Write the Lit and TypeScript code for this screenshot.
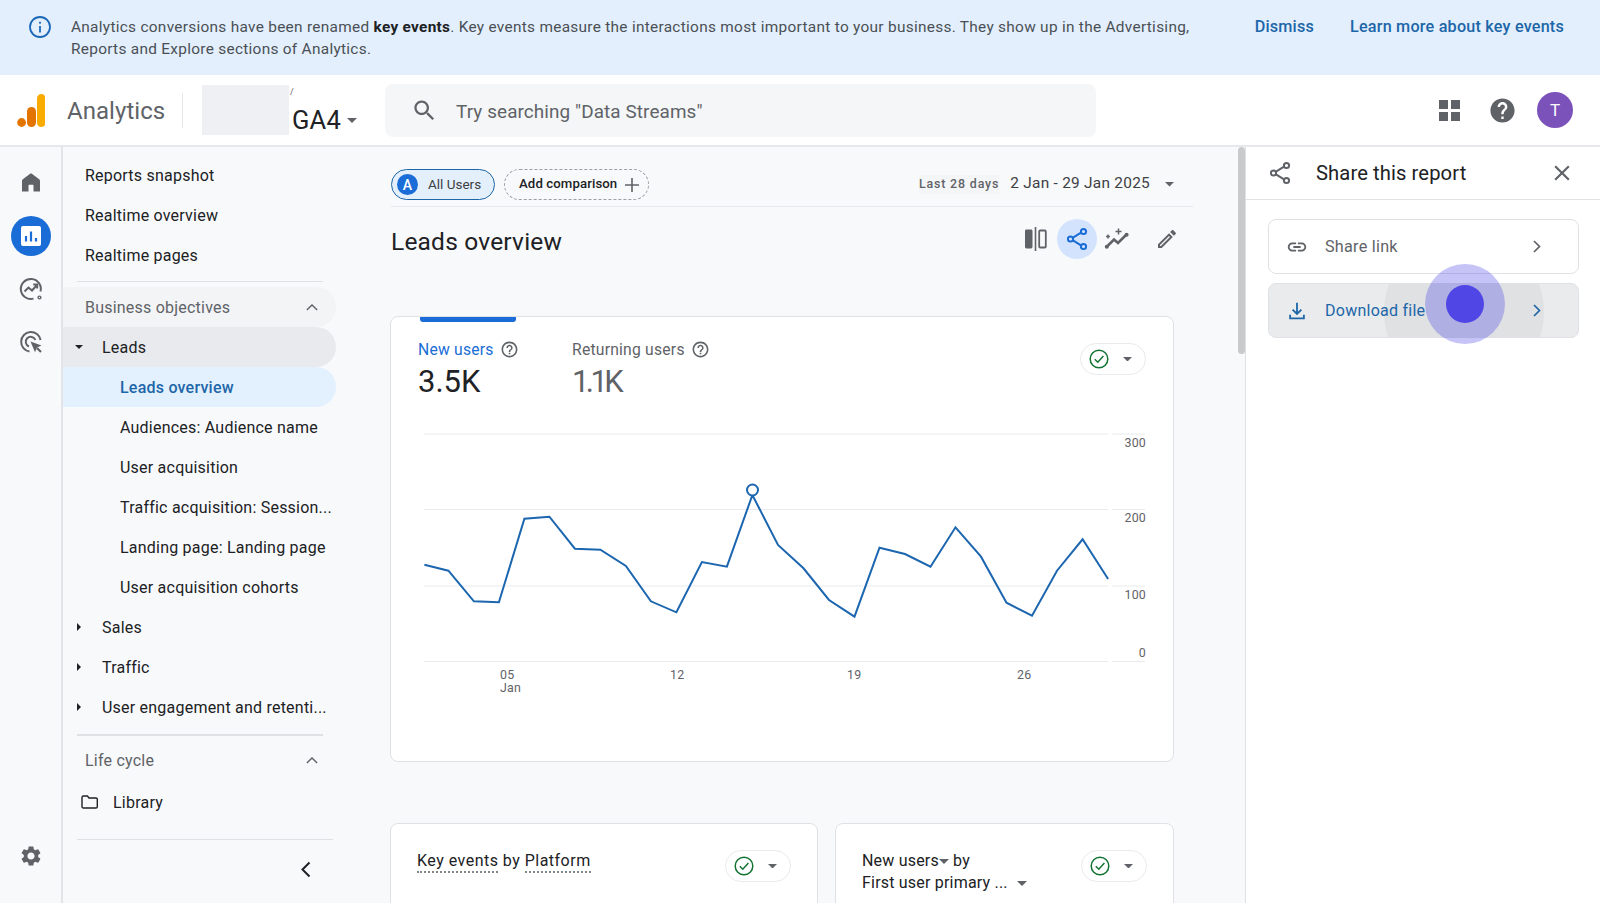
import { LitElement, html, css } from "lit";
import { customElement } from "lit/decorators.js";

const RAW: [number, number][] = [[87,434],[134,452],[184,544],[233,547],[283,296],[332,290],[382,386],[432,389],[482,438],[531,544],[581,577],[631,426],[680,440],[730,225],[780,375],[830,445],[880,540],[930,590],[979,383],[1029,402],[1079,440],[1128,322],[1178,410],[1228,548],[1278,587],[1327,452],[1377,358],[1427,477]];
const POINTS = RAW.map(([x, y]) => `${(380 + x / 1.96).toFixed(1)},${(420 + y / 3).toFixed(1)}`).join(" ");

const caret = (cls = "") => html`<svg class="caret ${cls}" viewBox="0 0 10 5"><path d="M0 0h10L5 5z" fill="currentColor"/></svg>`;
const sideCaret = html`<svg class="side-caret" viewBox="0 0 5 10"><path d="M0 0v10l5-5z" fill="currentColor"/></svg>`;
const helpOutline = html`<svg class="help-o" viewBox="0 0 24 24"><path fill="currentColor" d="M11 18h2v-2h-2v2zm1-16C6.48 2 2 6.48 2 12s4.48 10 10 10 10-4.48 10-10S17.52 2 12 2zm0 18c-4.41 0-8-3.59-8-8s3.59-8 8-8 8 3.59 8 8-3.59 8-8 8zm0-14c-2.21 0-4 1.79-4 4h2c0-1.1.9-2 2-2s2 .9 2 2c0 2-3 1.75-3 5h2c0-2.25 3-2.5 3-5 0-2.21-1.79-4-4-4z"/></svg>`;
const statusChip = html`<div class="status-chip">
  <svg class="check" viewBox="0 0 20 20"><circle cx="10" cy="10" r="8.8" fill="none" stroke="currentColor" stroke-width="1.5"/><path d="M5.8 10.2l3 3 5.6-6.2" fill="none" stroke="currentColor" stroke-width="1.5"/></svg>
  ${caret()}
</div>`;
const chevUp = html`<svg class="chev-up" viewBox="0 0 14 8"><path d="M1 7l6-6 6 6" fill="none" stroke="currentColor" stroke-width="1.6"/></svg>`;
const shareIcon = (cls: string) => html`<svg class=${cls} viewBox="0 0 24 24" fill="none" stroke="currentColor" stroke-width="2"><path d="M8 10.6l8-5M8 13.4l8 5"/><circle cx="5.5" cy="12" r="2.6"/><circle cx="18.5" cy="4.5" r="2.6"/><circle cx="18.5" cy="19.5" r="2.6"/></svg>`;

@customElement("app-root")
export class AppRoot extends LitElement {
  static styles = css`
    :host { display: flex; flex-direction: column; width: 1600px; height: 903px; overflow: hidden; background: #f8f9fb; font-family: Roboto, "Liberation Sans", sans-serif; color: #202124; }
    svg { display: block; flex: none; }

    .banner { height: 75px; flex: none; background: #e3effd; display: flex; align-items: flex-start; box-sizing: border-box; padding: 16px 36px 0 29px; }
    .info { width: 22px; height: 22px; color: #1a68b8; margin-right: 20px; }
    .banner-text { width: 1140px; font-size: 15.4px; line-height: 22px; letter-spacing: .29px; color: #4a4f55; }
    .banner-text b { color: #202124; font-weight: 700; }
    .banner-actions { margin-left: auto; display: flex; gap: 36px; font-size: 16.2px; line-height: 22px; font-weight: 500; letter-spacing: .2px; color: #1d66a8; }

    .header { height: 72px; flex: none; box-sizing: border-box; background: #fff; border-bottom: 2px solid #e6e8eb; display: flex; align-items: center; padding-left: 17px; }
    .logo { width: 28px; height: 33px; }
    .brand { margin: 2px 0 0 22px; font-size: 24px; color: #5f6368; width: 97px; letter-spacing: .05px; }
    .vsep { width: 1px; height: 35px; background: #e6e8eb; margin-left: 18px; }
    .blur { width: 87px; height: 50px; background: #eef0f3; margin-left: 19px; }
    .prop { display: flex; align-items: flex-end; height: 50px; position: relative; width: 96px; }
    .slash { position: absolute; left: 1px; top: 2px; font-size: 9px; color: #5f6368; }
    .ga { font-size: 25.5px; line-height: 34px; margin: 0 0 -2px 3px; color: #202124; letter-spacing: .2px; }
    .prop .caret { width: 10px; height: 5px; margin: 0 0 12px 6px; color: #5f6368; }
    .search { width: 711px; height: 53px; border-radius: 8px; background: #f5f6f7; display: flex; align-items: center; box-sizing: border-box; padding-left: 26px; color: #5f6368; font-size: 18.9px; letter-spacing: .1px; }
    .search svg { width: 27px; height: 27px; margin-right: 18px; }
    .search span { padding-top: 2px; }
    .head-right { margin-left: auto; display: flex; align-items: center; padding-right: 27px; color: #5f6368; }
    .apps { display: grid; grid-template-columns: 9px 9px; grid-auto-rows: 9px; gap: 3px; }
    .apps i { background: #5f6368; display: block; }
    .help { width: 29px; height: 29px; margin-left: 28px; }
    .avatar { width: 36px; height: 36px; border-radius: 50%; background: #7b52b9; color: #fff; margin-left: 20px; display: flex; align-items: center; justify-content: center; font-size: 17px; }

    .body { flex: 1; display: flex; min-height: 0; }

    .rail { width: 61px; flex: none; border-right: 2px solid #e2e4e7; display: flex; flex-direction: column; align-items: center; padding: 8.5px 0 35px; }
    .rail-item { height: 53.4px; display: flex; align-items: center; justify-content: center; color: #5f6368; }
    .rail-item svg { width: 24px; height: 24px; }
    .active-dot { width: 40px; height: 40px; border-radius: 50%; background: #1a6dd6; display: flex; align-items: center; justify-content: center; }
    .active-dot svg { width: 20px; height: 20px; }
    .gear { margin-top: auto; width: 24px; height: 24px; color: #5f6368; }

    .nav { width: 273px; flex: none; padding-top: 8px; font-size: 16px; letter-spacing: .22px; }
    .row { height: 40px; display: flex; align-items: center; box-sizing: border-box; white-space: nowrap; color: #202124; }
    .lvl0 { padding-left: 22px; }
    .lvl1 { padding-left: 14px; }
    .lvl2 { padding-left: 57px; }
    .side-caret { width: 4px; height: 8px; margin-right: 21px; color: #202124; }
    .down-caret { width: 8px; height: 4px; margin-right: 19px; color: #202124; }
    .rule { height: 1px; background: #dfe1e5; margin-left: 14px; }
    .rule.a { width: 246px; margin-top: 6px; margin-bottom: 5px; }
    .rule.b { width: 246px; margin-top: 7px; margin-bottom: 4px; height: 2px; }
    .rule.c { width: 256px; margin-top: 17px; }
    .group { justify-content: space-between; padding: 0 18px 0 22px; color: #5f6368; border-radius: 0 20px 20px 0; }
    .group.tint { background: #f3f4f6; }
    .chev-up { width: 12px; height: 7px; color: #5f6368; }
    .leads { background: #e8eaed; border-radius: 0 20px 20px 0; padding-left: 12px; }
    .current { background: #e3f0fd; color: #1d66a8; font-weight: 500; border-radius: 0 20px 20px 0; }
    .library { margin-top: 2px; padding-left: 18px; gap: 15px; }
    .library svg { width: 17px; height: 14px; color: #202124; }
    .collapse { display: flex; justify-content: flex-end; padding: 21px 25px 0 0; }
    .collapse svg { width: 11px; height: 17px; color: #202124; }

    .main { flex: 1; min-width: 0; padding: 22px 0 0 55px; overflow: hidden; }
    .toolbar { width: 802px; height: 37px; border-bottom: 1px solid #e6e8eb; display: flex; align-items: flex-start; }
    .chip-a { height: 31px; width: 104px; box-sizing: border-box; border: 1px solid #1d66a8; border-radius: 16px; background: #e4effc; display: flex; align-items: center; padding-left: 5px; font-size: 13.5px; gap: 10px; color: #3c4043; }
    .chip-a span { padding-bottom: 2px; }
    .chip-a i { width: 21px; height: 21px; border-radius: 50%; background: #1a6dd6; color: #fff; font-style: normal; display: flex; align-items: center; justify-content: center; font-size: 14px; font-weight: 500; }
    .chip-add { margin-left: 9px; height: 31px; width: 145px; box-sizing: border-box; border: 1px dashed #9aa0a6; border-radius: 16px; display: flex; align-items: center; padding-left: 14px; font-size: 13.2px; font-weight: 500; color: #202124; gap: 8px; letter-spacing: .1px; }
    .chip-add span { padding-bottom: 2px; }
    .chip-add svg { width: 14px; height: 14px; color: #5f6368; }
    .date { margin-left: auto; height: 31px; display: flex; align-items: center; padding: 0 19px 0 0; }
    .date-label { font-size: 12.4px; font-weight: 500; letter-spacing: .85px; color: #5f6368; background: #f4f5f6; padding: 1px 0 3px; }
    .date-range { margin-left: 11px; font-size: 15.4px; color: #3c4043; letter-spacing: .27px; padding-bottom: 3px; }
    .date .caret { width: 9px; height: 4.5px; margin-left: 15px; color: #5f6368; }

    .title-row { width: 802px; height: 40px; margin-top: 11px; display: flex; align-items: center; }
    h1 { margin: 6px 0 0; font-size: 24.5px; font-weight: 400; letter-spacing: .2px; color: #202124; }
    .title-tools { margin: 1px 0 0 auto; display: flex; align-items: center; padding-right: 14px; color: #5f6368; }
    .title-tools svg { width: 24px; height: 24px; }
    .share-on { width: 40px; height: 40px; border-radius: 50%; background: #d3e3fd; color: #1a6dd6; display: flex; align-items: center; justify-content: center; margin-left: 9px; }
    .title-tools .spark { width: 26px; margin-left: 7px; }
    .edit { margin-left: 25px; }

    .card { background: #fff; border: 1px solid #dfe1e5; border-radius: 8px; box-sizing: border-box; }
    .card-main { width: 784px; height: 446px; margin: 58px 0 0 -1px; }
    .tab { width: 96px; height: 5px; background: #1a6dd6; margin-left: 29px; border-radius: 0 0 3px 3px; }
    .metrics { display: flex; padding: 16px 27px 0; align-items: flex-start; }
    .metric { width: 154px; }
    .metric-label { display: flex; align-items: center; gap: 6px; height: 22px; font-size: 15.7px; letter-spacing: .22px; color: #5f6368; }
    .help-o { width: 19px; height: 19px; color: #5f6368; }
    .metric.on .metric-label { color: #1a6dd6; }
    .metric-value { font-size: 31px; line-height: 44px; color: #5f6368; }
    .metric-value.narrow { letter-spacing: -3.6px; }
    .metric.on .metric-value { color: #202124; }
    .status-chip { margin-left: auto; width: 66px; height: 32px; border: 1px solid #e8eaed; border-radius: 16px; box-sizing: border-box; display: flex; align-items: center; padding-left: 8px; background: #fff; }
    .check { width: 20px; height: 20px; color: #137333; }
    .status-chip .caret { width: 9px; height: 4.5px; margin-left: 14px; color: #5f6368; }
    .metrics .status-chip { margin-top: 5px; }
    .chart { display: block; width: 782px; height: 280px; margin-top: 21px; }
    .chart text { font-family: Roboto, "Liberation Sans", sans-serif; font-size: 12.4px; fill: #5f6368; letter-spacing: .2px; }

    .lower { display: flex; gap: 17px; margin: 61px 0 0 -1px; }
    .card-low { height: 120px; padding: 26px 26px 0 26px; display: flex; align-items: flex-start; font-size: 16px; line-height: 22px; letter-spacing: .2px; color: #202124; }
    .card-low.one { width: 428px; letter-spacing: .48px; }
    .card-low.two { width: 339px; }
    .dot-u { border-bottom: 2px dotted #80868b; padding-bottom: 1px; }
    .inline-caret { display: inline-block; width: 10px; height: 5px; vertical-align: middle; color: #5f6368; }
    .inline-caret.gap { margin-left: 5px; }

    .scroll { width: 7px; flex: none; }
    .thumb { height: 207px; background: #c8cacc; border-radius: 4px; }

    .panel { width: 355px; flex: none; box-sizing: border-box; background: #fff; border-left: 1px solid #dfe1e5; position: relative; overflow: hidden; }
    .panel-head { height: 53px; box-sizing: border-box; border-bottom: 1px solid #e0e2e5; display: flex; align-items: center; padding: 0 25px 0 22px; }
    .panel-head .p-share { width: 24px; height: 24px; color: #5f6368; }
    .panel-title { margin-left: 24px; font-size: 20.2px; letter-spacing: .1px; color: #202124; }
    .close { margin-left: auto; width: 26px; height: 26px; color: #5f6368; }
    .opts { padding: 19px 21px 0 22px; display: flex; flex-direction: column; gap: 9px; }
    .opt { height: 55px; box-sizing: border-box; border: 1px solid #dfe1e5; border-radius: 8px; display: flex; align-items: center; padding: 0 37px 0 17px; font-size: 16.2px; letter-spacing: .25px; color: #5f6368; position: relative; overflow: hidden; }
    .opt svg { position: relative; }
    .opt .o-icon { width: 22px; height: 22px; margin-right: 17px; }
    .opt .o-text { position: relative; }
    .opt .o-chev { margin-left: auto; width: 8px; height: 13px; }
    .opt.hover { background: #e9ebed; color: #1d66a8; font-size: 16px; }
    .ripple { position: absolute; left: 115px; top: -52px; width: 160px; height: 160px; border-radius: 50%; background: #dfe1e3; }
    .pointer-halo { position: absolute; left: 179px; top: 117px; width: 80px; height: 80px; border-radius: 50%; background: rgba(79, 70, 229, .32); display: flex; align-items: center; justify-content: center; }
    .pointer-halo i { width: 38px; height: 38px; border-radius: 50%; background: #4f46e5; display: block; }
  `;

  render() {
    return html`
      <div class="banner">
        <svg class="info" viewBox="0 0 22 22" fill="none" stroke="currentColor" stroke-width="1.8"><circle cx="11" cy="11" r="10"/><path d="M11 10v6.5M11 5.8v2"/></svg>
        <div class="banner-text">Analytics conversions have been renamed <b>key events</b>. Key events measure the interactions most important to your business. They show up in the Advertising, Reports and Explore sections of Analytics.</div>
        <div class="banner-actions"><span>Dismiss</span><span>Learn more about key events</span></div>
      </div>

      <div class="header">
        <svg class="logo" viewBox="0 0 28 33"><circle cx="4.6" cy="28.5" r="4.4" fill="#e37400"/><rect x="10" y="13" width="9" height="20" rx="4.5" fill="#e37400"/><rect x="20" y="0" width="8.6" height="33" rx="4.3" fill="#f9ab00"/></svg>
        <div class="brand">Analytics</div>
        <div class="vsep"></div>
        <div class="blur"></div>
        <div class="prop"><span class="slash">/</span><span class="ga">GA4</span>${caret()}</div>
        <div class="search">
          <svg viewBox="0 0 24 24"><path fill="currentColor" d="M15.5 14h-.79l-.28-.27C15.41 12.59 16 11.11 16 9.5 16 5.91 13.09 3 9.5 3S3 5.91 3 9.5 5.91 16 9.5 16c1.61 0 3.09-.59 4.23-1.57l.27.28v.79l5 4.99L20.49 19l-4.99-5zm-6 0C7.01 14 5 11.99 5 9.5S7.01 5 9.5 5 14 7.01 14 9.5 11.99 14 9.5 14z"/></svg>
          <span>Try searching "Data Streams"</span>
        </div>
        <div class="head-right">
          <div class="apps"><i></i><i></i><i></i><i></i></div>
          <svg class="help" viewBox="0 0 24 24"><path fill="currentColor" d="M12 2C6.48 2 2 6.48 2 12s4.48 10 10 10 10-4.48 10-10S17.52 2 12 2zm1 17h-2v-2h2v2zm2.07-7.75l-.9.92C13.45 12.9 13 13.5 13 15h-2v-.5c0-1.1.45-2.1 1.17-2.83l1.24-1.26c.37-.36.59-.86.59-1.41 0-1.1-.9-2-2-2s-2 .9-2 2H8c0-2.21 1.79-4 4-4s4 1.79 4 4c0 .88-.36 1.68-.93 2.25z"/></svg>
          <div class="avatar">T</div>
        </div>
      </div>

      <div class="body">
        <div class="rail">
          <div class="rail-item"><svg viewBox="0 0 24 24"><path fill="currentColor" d="M3 21.5V10.8c0-.6.3-1.1.8-1.5l7-5.4c.7-.5 1.7-.5 2.4 0l7 5.4c.5.4.8.9.8 1.5v10.7h-6.5v-5.7c0-.6-.5-1-1-1h-3c-.5 0-1 .4-1 1v5.7z"/></svg></div>
          <div class="rail-item"><div class="active-dot"><svg viewBox="0 0 20 20"><rect x="0" y="0" width="20" height="20" rx="2" fill="#fff"/><path d="M5 10v5.5M10 5.5v10M15 12v3.5" stroke="#1a6dd6" stroke-width="2.2"/></svg></div></div>
          <div class="rail-item"><svg viewBox="0 0 24 24" fill="none" stroke="currentColor" stroke-width="2"><path d="M21.5 14.5A10 10 0 1 0 14.5 21.6"/><path d="M5.5 14.5l4-4 3.5 3 5-5.5M14.2 7.6h4v4"/><circle cx="20.5" cy="20.5" r="1.4" stroke-width="1.4"/></svg></div>
          <div class="rail-item"><svg viewBox="0 0 24 24" fill="none" stroke="currentColor" stroke-width="2"><path d="M10.5 21.5A9.8 9.8 0 1 1 21.6 10"/><path d="M10 16.5a5 5 0 1 1 6.4-6.5"/><path d="M11.5 11.5l11 4-4.5 2-2 4.8z" fill="currentColor" stroke="none"/><path d="M18 18l4 4" stroke-width="2.2"/></svg></div>
          <svg class="gear" viewBox="0 0 24 24"><path fill="currentColor" d="M19.14 12.94c.04-.3.06-.61.06-.94 0-.32-.02-.64-.07-.94l2.03-1.58c.18-.14.23-.41.12-.61l-1.92-3.32c-.12-.22-.37-.29-.59-.22l-2.39.96c-.5-.38-1.03-.7-1.62-.94l-.36-2.54c-.04-.24-.24-.41-.48-.41h-3.84c-.24 0-.43.17-.47.41l-.36 2.54c-.59.24-1.13.57-1.62.94l-2.39-.96c-.22-.08-.47 0-.59.22L2.74 8.87c-.12.21-.08.47.12.61l2.03 1.58c-.05.3-.09.63-.09.94s.02.64.07.94l-2.03 1.58c-.18.14-.23.41-.12.61l1.92 3.32c.12.22.37.29.59.22l2.39-.96c.5.38 1.03.7 1.62.94l.36 2.54c.05.24.24.41.48.41h3.84c.24 0 .44-.17.47-.41l.36-2.54c.59-.24 1.13-.56 1.62-.94l2.39.96c.22.08.47 0 .59-.22l1.92-3.32c.12-.22.07-.47-.12-.61l-2.01-1.58zM12 15.6c-1.98 0-3.6-1.62-3.6-3.6s1.62-3.6 3.6-3.6 3.6 1.62 3.6 3.6-1.62 3.6-3.6 3.6z"/></svg>
        </div>

        <div class="nav">
          <div class="row lvl0">Reports snapshot</div>
          <div class="row lvl0">Realtime overview</div>
          <div class="row lvl0">Realtime pages</div>
          <div class="rule a"></div>
          <div class="row group tint"><span>Business objectives</span>${chevUp}</div>
          <div class="row lvl1 leads"><svg class="down-caret" viewBox="0 0 10 5"><path d="M0 0h10L5 5z" fill="currentColor"/></svg>Leads</div>
          <div class="row lvl2 current">Leads overview</div>
          <div class="row lvl2">Audiences: Audience name</div>
          <div class="row lvl2">User acquisition</div>
          <div class="row lvl2">Traffic acquisition: Session...</div>
          <div class="row lvl2">Landing page: Landing page</div>
          <div class="row lvl2">User acquisition cohorts</div>
          <div class="row lvl1">${sideCaret}Sales</div>
          <div class="row lvl1">${sideCaret}Traffic</div>
          <div class="row lvl1">${sideCaret}User engagement and retenti...</div>
          <div class="rule b"></div>
          <div class="row group"><span>Life cycle</span>${chevUp}</div>
          <div class="row library">
            <svg viewBox="0 0 17 14" fill="none" stroke="currentColor" stroke-width="1.4"><path d="M1 2.6c0-.9.6-1.6 1.4-1.6h4l1.6 2h7c.7 0 1.3.6 1.3 1.3v7.4c0 .7-.6 1.3-1.3 1.3H2.3c-.7 0-1.3-.6-1.3-1.3z"/></svg>
            <span>Library</span>
          </div>
          <div class="rule c"></div>
          <div class="collapse"><svg viewBox="0 0 11 17" fill="none" stroke="currentColor" stroke-width="2"><path d="M9.5 1.5L2.5 8.5l7 7"/></svg></div>
        </div>

        <div class="main">
          <div class="toolbar">
            <div class="chip-a"><i>A</i><span>All Users</span></div>
            <div class="chip-add"><span>Add comparison</span><svg viewBox="0 0 14 14" fill="none" stroke="currentColor" stroke-width="1.6"><path d="M7 0v14M0 7h14"/></svg></div>
            <div class="date"><span class="date-label">Last 28 days</span><span class="date-range">2 Jan - 29 Jan 2025</span>${caret()}</div>
          </div>
          <div class="title-row">
            <h1>Leads overview</h1>
            <div class="title-tools">
              <svg viewBox="0 0 24 24"><rect x="1" y="2.5" width="7.5" height="19" rx="1.4" fill="currentColor"/><path d="M11.5 0v24" stroke="currentColor" stroke-width="1.6"/><rect x="15.2" y="3.5" width="6.6" height="17" rx="1" fill="none" stroke="currentColor" stroke-width="1.8"/></svg>
              <div class="share-on">${shareIcon("")}</div>
              <svg class="spark" viewBox="0 0 26 24" fill="none" stroke="currentColor" stroke-width="2.6"><path d="M2.5 20l7.5-7.5 4 3.5 8.5-8.5"/><circle cx="2.8" cy="19.8" r="2" fill="currentColor" stroke="none"/><circle cx="22.6" cy="7.8" r="2" fill="currentColor" stroke="none"/><path d="M14.5 1.5v6M11.5 4.5h6M4 7.5v4M2 9.5h4" stroke-width="1.5"/></svg>
              <svg class="edit" viewBox="0 0 24 24"><path fill="currentColor" d="M3 17.25V21h3.75L17.81 9.94l-3.75-3.75L3 17.25zM5.92 19H5v-.92l9.06-9.06.92.92L5.92 19zM20.71 5.63l-2.34-2.34c-.2-.2-.45-.29-.71-.29s-.51.1-.7.29l-1.83 1.83 3.75 3.75 1.83-1.83c.39-.39.39-1.02 0-1.41z"/></svg>
            </div>
          </div>

          <div class="card card-main">
            <div class="tab"></div>
            <div class="metrics">
              <div class="metric on"><div class="metric-label">New users ${helpOutline}</div><div class="metric-value">3.5K</div></div>
              <div class="metric"><div class="metric-label">Returning users ${helpOutline}</div><div class="metric-value narrow">1.1K</div></div>
              ${statusChip}
            </div>
            <svg class="chart" viewBox="391 425 782 280">
              <g stroke="#e8eaed" stroke-width="1">
                <path d="M424 434H1108M1112 434H1145"/>
                <path d="M424 509.5H1108M1112 509.5H1145"/>
                <path d="M424 586H1108M1112 586H1145"/>
                <path d="M424 661.5H1108M1112 661.5H1145"/>
              </g>
              <polyline points=${POINTS} fill="none" stroke="#1c66b0" stroke-width="2"/>
              <circle cx="752.5" cy="490" r="5.5" fill="#fff" stroke="#1c66b0" stroke-width="2"/>
              <g text-anchor="end">
                <text x="1146" y="447">300</text>
                <text x="1146" y="522">200</text>
                <text x="1146" y="599">100</text>
                <text x="1146" y="657">0</text>
              </g>
              <text x="500" y="679">05</text>
              <text x="500" y="692">Jan</text>
              <text x="670" y="679">12</text>
              <text x="847" y="679">19</text>
              <text x="1017" y="679">26</text>
            </svg>
          </div>

          <div class="lower">
            <div class="card card-low one">
              <span><span class="dot-u">Key events</span> by <span class="dot-u">Platform</span></span>
              ${statusChip}
            </div>
            <div class="card card-low two">
              <div>New users<svg class="inline-caret" viewBox="0 0 10 5"><path d="M0 0h10L5 5z" fill="currentColor"/></svg> by<br>First user primary ... <svg class="inline-caret gap" viewBox="0 0 10 5"><path d="M0 0h10L5 5z" fill="currentColor"/></svg></div>
              ${statusChip}
            </div>
          </div>
        </div>

        <div class="scroll"><div class="thumb"></div></div>

        <div class="panel">
          <div class="panel-head">
            ${shareIcon("p-share")}
            <span class="panel-title">Share this report</span>
            <svg class="close" viewBox="0 0 24 24"><path fill="currentColor" d="M19 6.41L17.59 5 12 10.59 6.41 5 5 6.41 10.59 12 5 17.59 6.41 19 12 13.41 17.59 19 19 17.59 13.41 12z"/></svg>
          </div>
          <div class="opts">
            <div class="opt">
              <svg class="o-icon" viewBox="0 0 24 24"><path fill="currentColor" d="M3.9 12c0-1.71 1.39-3.1 3.1-3.1h4V7H7c-2.76 0-5 2.24-5 5s2.24 5 5 5h4v-1.9H7c-1.71 0-3.1-1.39-3.1-3.1zM8 13h8v-2H8v2zm9-6h-4v1.9h4c1.71 0 3.1 1.39 3.1 3.1s-1.39 3.1-3.1 3.1h-4V17h4c2.76 0 5-2.24 5-5s-2.24-5-5-5z"/></svg>
              <span class="o-text">Share link</span>
              <svg class="o-chev" viewBox="0 0 8 13" fill="none" stroke="currentColor" stroke-width="1.7"><path d="M1 1l5.5 5.5L1 12"/></svg>
            </div>
            <div class="opt hover">
              <div class="ripple"></div>
              <svg class="o-icon" viewBox="0 0 24 24" fill="none" stroke="currentColor" stroke-width="2"><path d="M12 3v12M7.2 10.5L12 15.2l4.8-4.7M4.5 16v4h15v-4"/></svg>
              <span class="o-text">Download file</span>
              <svg class="o-chev" viewBox="0 0 8 13" fill="none" stroke="currentColor" stroke-width="1.7"><path d="M1 1l5.5 5.5L1 12"/></svg>
            </div>
          </div>
          <div class="pointer-halo"><i></i></div>
        </div>
      </div>
    `;
  }
}
